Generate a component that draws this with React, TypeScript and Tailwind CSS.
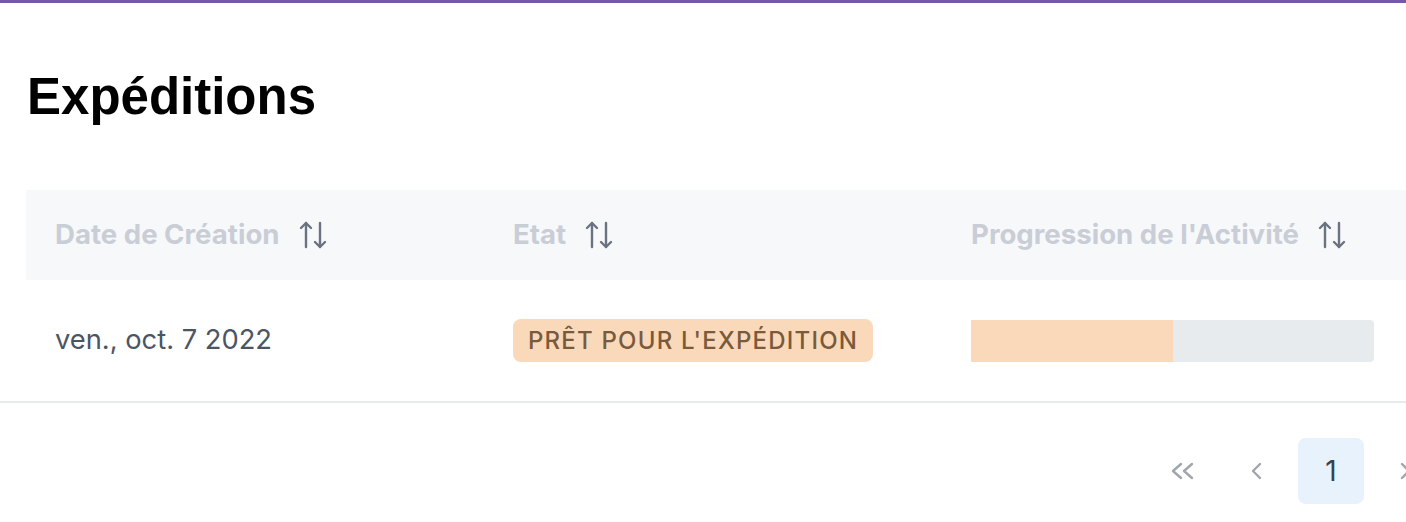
import React from "react";

function SortIcon() {
  return (
    <svg width="28" height="32" viewBox="0 0 28 32" fill="none" stroke="#6b7280" strokeWidth="2.4" strokeLinecap="round" strokeLinejoin="round">
      <path d="M7 28V4" />
      <path d="M2 9l5-5 5 5" />
      <path d="M21 4v24" />
      <path d="M16 23l5 5 5-5" />
    </svg>
  );
}

function HeaderCell({ label }: { label: string }) {
  return (
    <div className="w-[458px] shrink-0 pl-[29px] flex items-center gap-[19px]">
      <span className="text-[27.6px] font-bold text-[#c9ced6] leading-none">{label}</span>
      <SortIcon />
    </div>
  );
}

export default function App() {
  return (
    <div className="w-[1406px] overflow-hidden bg-white border-t-[3px] border-[#7457a6]" style={{ fontFamily: "Inter, 'Noto Sans', sans-serif" }}>
      <div className="w-[1460px]">
        <h1 className="pl-[27px] pt-[68px] text-[51px] font-bold leading-none text-black" style={{ fontFamily: "'Liberation Sans', Arial, sans-serif" }}>
          Expéditions
        </h1>
        <div className="ml-[26px] mt-[68px]">
          <div className="flex h-[90px] bg-[#f7f8fa]">
            <HeaderCell label="Date de Création" />
            <HeaderCell label="Etat" />
            <HeaderCell label="Progression de l'Activité" />
          </div>
          <div className="flex h-[121px] items-center">
            <div className="w-[458px] shrink-0 pl-[29px] text-[27.3px] text-[#4b5563]">ven., oct. 7 2022</div>
            <div className="w-[458px] shrink-0 pl-[29px]">
              <span className="inline-flex items-center h-[43px] px-[15px] rounded-[8px] bg-[#f9d9b9] text-[#7a5a3c] text-[24px] font-medium tracking-[1.2px] uppercase">
                Prêt pour l'expédition
              </span>
            </div>
            <div className="w-[458px] shrink-0 pl-[29px]">
              <div className="flex w-[403px] h-[42px] bg-[#e8ebee] rounded-r-[4px] overflow-hidden">
                <div className="w-1/2 h-full bg-[#f9d9b9]" />
              </div>
            </div>
          </div>
        </div>
        <div className="border-t-2 border-[#e8ebee] flex pt-[35px] pl-[1150px]">
          <div className="flex items-center gap-[8px]">
            <span className="w-[66px] h-[66px] flex items-center justify-center">
              <svg width="26" height="20" viewBox="0 0 26 20" fill="none" stroke="#a1a6ad" strokeWidth="2.4" strokeLinecap="round" strokeLinejoin="round">
                <path d="M11 3l-8 7 8 7" />
                <path d="M22 3l-8 7 8 7" />
              </svg>
            </span>
            <span className="w-[66px] h-[66px] flex items-center justify-center">
              <svg width="14" height="20" viewBox="0 0 14 20" fill="none" stroke="#a1a6ad" strokeWidth="2.4" strokeLinecap="round" strokeLinejoin="round">
                <path d="M10 3l-7 7 7 7" />
              </svg>
            </span>
            <span className="w-[66px] h-[66px] rounded-[8px] bg-[#e7f2fc] flex items-center justify-center text-[28px] text-[#374151]">1</span>
            <span className="w-[66px] h-[66px] flex items-center justify-center">
              <svg width="14" height="20" viewBox="0 0 14 20" fill="none" stroke="#a1a6ad" strokeWidth="2.4" strokeLinecap="round" strokeLinejoin="round">
                <path d="M4 3l7 7-7 7" />
              </svg>
            </span>
          </div>
        </div>
      </div>
    </div>
  );
}
